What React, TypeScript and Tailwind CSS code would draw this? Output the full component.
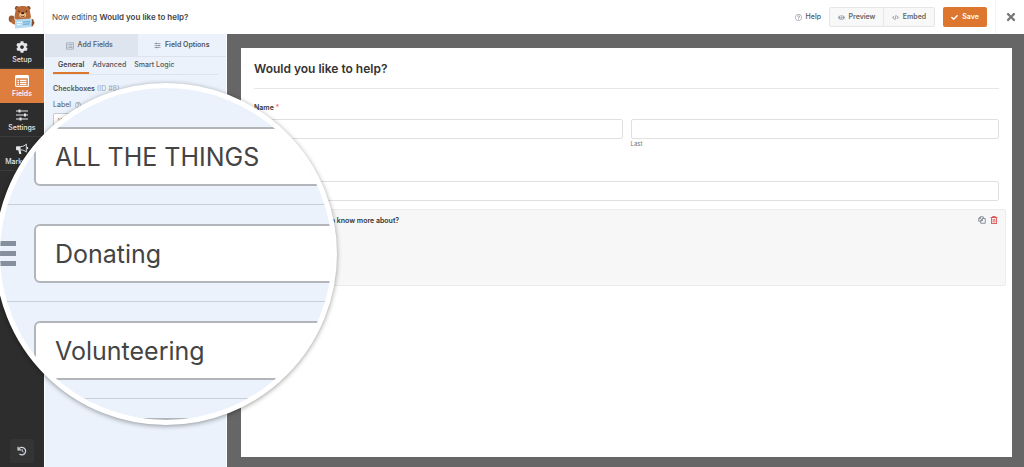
// src/App.tsx
import { useState } from 'react'
import { FaCheck, FaCode, FaCog, FaEye, FaRegListAlt, FaRegQuestionCircle, FaRegTrashAlt, FaTimes } from 'react-icons/fa'
import clsx from 'clsx'

const choices = ['ALL THE THINGS', 'Donating', 'Volunteering', '']

function BearLogo() {
    return (
        <svg viewBox="0 0 28 24" className="h-6 w-7" aria-hidden="true">
            {/* Arms */}
            <ellipse cx="3.6" cy="14" rx="2.9" ry="3.4" fill="#9c5a33" />
            <path d="M3 14l6 1v5.500l-5-2z" fill="#b86b3c" />
            <path d="M20 15l5-1 1.500 4-2 3.500-4-1z" fill="#8a4d2c" />
            {/* Head */}
            <circle cx="9" cy="3.200" r="2.100" fill="#8f4f2d" />
            <circle cx="20.400" cy="3.200" r="2.100" fill="#8f4f2d" />
            <path d="M7.500 6c0-3.500 3.500-5 7.200-5s7.200 1.500 7.200 5l1 5.500c0 3-3 4.500-8.200 4.500s-8.200-1.500-8.200-4.500z" fill="#b96a37" />
            <ellipse cx="14.700" cy="10" rx="3.500" ry="2.600" fill="#efc08f" />
            <ellipse cx="14.700" cy="8.200" rx="1.600" ry="1.100" fill="#3c2418" />
            <circle cx="11" cy="6.200" r=".8" fill="#3c2418" />
            <circle cx="18.400" cy="6.200" r=".8" fill="#3c2418" />
            <path d="M12.700 10.900q2 1.800 4 0" fill="none" stroke="#6b2f1c" strokeWidth=".9" />
            {/* Sign */}
            <path d="M7 14.500l17-1-.5 8.500-16.500 1.500z" fill="#b4dbf2" />
            <path d="M9 17.500l5-.3M9 19.700l4-.2" stroke="#eef8fe" strokeWidth="1" />
            <path d="M15 17l7-.4M15 19.300l6.500-.4" stroke="#6daad0" strokeWidth="1.200" />
        </svg>
    )
}

function SlidersIcon({ className }: { className?: string }) {
    return (
        <svg viewBox="0 0 14 12" className={className} fill="none" stroke="currentColor" strokeWidth="1.1" aria-hidden="true">
            <path d="M1 2h12M1 6h12M1 10h12" />
            <path d="M4.500 .6v2.800M10 4.600v2.800M5.500 8.600v2.800" strokeWidth="2" />
        </svg>
    )
}

function FieldsIcon({ className }: { className?: string }) {
    return (
        <svg viewBox="0 0 14 12" className={className} fill="none" stroke="currentColor" aria-hidden="true">
            <rect x=".6" y=".6" width="12.800" height="10.800" rx="1" strokeWidth="1.200" />
            <path d="M.6 2h12.800" strokeWidth="2.600" />
            <path d="M2.500 5.300h1.500M2.500 7.300h1.500M2.500 9.300h1.500M5 5.300h6.500M5 7.300h6.500M5 9.300h6.500" strokeWidth="1.200" />
        </svg>
    )
}

function MegaphoneIcon({ className }: { className?: string }) {
    return (
        <svg viewBox="0 0 14 13" className={className} fill="none" stroke="currentColor" aria-hidden="true">
            <path d="M1.500 3.500h4v4.300h-4a1 1 0 0 1-1-1V4.500a1 1 0 0 1 1-1z" fill="currentColor" stroke="none" />
            <path d="M3 7.500h2.400l1 4.500H4z" fill="currentColor" stroke="none" />
            <path d="M5.500 3.900C8.300 3.800 10 2.800 11.700 1.200v8.700C10 8.300 8.300 7.500 5.500 7.400" strokeWidth="1" />
            <path d="M13 4.300v2.400" strokeWidth="1.200" />
        </svg>
    )
}

function DuplicateIcon({ className }: { className?: string }) {
    return (
        <svg viewBox="0 0 16 16" className={className} fill="none" stroke="currentColor" strokeWidth="1.500" aria-hidden="true">
            <path d="M5 10.500H1.500V4.500l3.500-3h5.500v3" />
            <path d="M5.500 8.500l3.500-3.500h5.500v9.500h-9z" />
            <path d="M1.500 5H5V1.500M5.500 9H9V5" />
        </svg>
    )
}

function RevisionsIcon({ className }: { className?: string }) {
    return (
        <svg viewBox="0 0 12 12" className={className} fill="none" stroke="currentColor" strokeWidth="1.500" aria-hidden="true">
            <path d="M2 3.800A4.500 4.500 0 1 1 3 9.600" />
            <path d="M1.300 .8v3.700H5" />
            <path d="M6.200 3.800v2.400l1.600.9" strokeWidth="1.200" />
        </svg>
    )
}

const navItems = [
    { name: 'Setup', icon: <FaCog className="size-3" /> },
    { name: 'Fields', icon: <FieldsIcon className="h-3 w-3.5" /> },
    { name: 'Settings', icon: <SlidersIcon className="h-3 w-3.5" /> },
    { name: 'Marketing', icon: <MegaphoneIcon className="h-3 w-3.5" /> },
]

function Header() {
    return (
        <header className="flex h-[34px] shrink-0 items-center bg-white">
            <div className="flex h-full w-11 items-center justify-center border-r border-gray-100">
                <BearLogo />
            </div>
            <h1 className="ml-2 flex-1 text-[8px] text-[#444]">
                Now editing <strong className="font-semibold">Would you like to help?</strong>
            </h1>
            <a href="#help" className="mr-2 flex items-center gap-1 text-[7px] font-medium text-[#555]">
                <FaRegQuestionCircle className="size-[7px] text-gray-400" />
                Help
            </a>
            <div className="flex h-5 rounded-xs border border-[#e6e6e6] bg-[#f8f8f8] text-[7px] font-semibold text-[#666]">
                <button className="flex w-[54px] items-center justify-center gap-1 border-r border-[#e6e6e6]">
                    <FaEye className="size-[7px] text-gray-400" />
                    Preview
                </button>
                <button className="flex w-[50px] items-center justify-center gap-1">
                    <FaCode className="size-[7px] text-gray-400" />
                    Embed
                </button>
            </div>
            <button className="ml-2 flex h-5 w-11 items-center justify-center gap-1 rounded-xs bg-[#dd7730] text-[7px] font-semibold text-white">
                <FaCheck className="size-[7px]" />
                Save
            </button>
            <button aria-label="Close" className="ml-2 flex h-full w-[29px] items-center justify-center border-l border-gray-100 pl-0.5 text-[#777]">
                <FaTimes className="size-3" />
            </button>
        </header>
    )
}

function Sidebar() {
    return (
        <nav className="flex w-11 shrink-0 flex-col bg-[#2d2d2d] pt-px text-white">
            {navItems.map((item) => (
                <a
                    key={item.name}
                    href={`#${item.name.toLowerCase()}`}
                    className={clsx(
                        'flex h-[34px] flex-col items-center justify-center gap-0.5 pt-0.5 text-[7px] leading-[10px] font-medium',
                        item.name === 'Fields' ? 'bg-[#dd7d3e]' : 'border-b border-[#3c3c3c] text-gray-200'
                    )}
                >
                    {item.icon}
                    {item.name}
                </a>
            ))}
            <button aria-label="Revisions" className="mx-auto mt-auto mb-1 flex size-6 items-center justify-center rounded-xs bg-[#343434] text-gray-300">
                <RevisionsIcon className="size-2.5" />
            </button>
        </nav>
    )
}

function FieldPanel() {
    return (
        <aside className="w-[183px] shrink-0 border-x border-white bg-[#ebf2fb] text-[7px] text-[#555]">
            <div className="flex h-[23px] border-b border-[#dde4ed]">
                <button className="flex flex-1 items-center justify-center gap-1 bg-[#dee5ef] pt-px pr-1 font-medium">
                    <FaRegListAlt className="size-2 text-gray-400" />
                    Add Fields
                </button>
                <button className="flex flex-1 items-center justify-center gap-1 pt-px font-semibold">
                    <SlidersIcon className="size-[7px] text-gray-500" />
                    Field Options
                </button>
            </div>
            <div className="px-2">
                <div className="flex h-[18px] border-b border-[#dde4ed] font-medium">
                    <button className="border-b-2 border-[#dd7730] px-[5px] pt-0.5 font-semibold text-[#444]">General</button>
                    <button className="px-[3px]">Advanced</button>
                    <button className="px-[5px]">Smart Logic</button>
                </div>
                <h2 className="mt-2 leading-3 font-semibold">
                    Checkboxes <span className="font-normal text-gray-400">(ID #8)</span>
                </h2>
                <label htmlFor="field-label" className="mt-1 flex items-center gap-1 leading-3">
                    Label <FaRegQuestionCircle className="size-1.5 text-gray-400" />
                </label>
                <input id="field-label" defaultValue="Which would you like to know more about?" className="mt-0.5 h-4 w-full rounded-xs border border-[#c5cad1] bg-white px-1" />
            </div>
        </aside>
    )
}

function FormPreview() {
    return (
        <main className="flex-1 bg-[#666] pt-3.5 pr-3 pb-2.5 pl-3.5">
            <div className="h-full bg-white px-1.5 text-[#333]">
                <div className="px-[7px] pt-3">
                    <h2 className="border-b border-[#e6e6e6] pb-2.5 text-[12px] leading-[18px] font-semibold">Would you like to help?</h2>
                    <p className="mt-3.5 text-[7px] leading-[10px] font-semibold">
                        Name <span className="text-red-400">*</span>
                    </p>
                    <div className="mt-1.5 grid grid-cols-2 gap-2">
                        <input aria-label="First name" className="h-5 w-full min-w-0 rounded-xs border border-[#e0e0e0]" />
                        <div>
                            <input id="last-name" className="block h-5 w-full min-w-0 rounded-xs border border-[#e0e0e0]" />
                            <label htmlFor="last-name" className="block text-[6px] leading-[10px] text-gray-500">Last</label>
                        </div>
                    </div>
                    <input aria-label="Email" className="mt-8 block h-5 w-full rounded-xs border border-[#e0e0e0]" />
                </div>
                <section className="mt-2 flex h-[77px] items-start justify-between rounded-xs border border-[#ececec] bg-[#f7f7f7] px-[7px] pt-1.5">
                    <h3 className="text-[7px] leading-[10px] font-semibold">Which would you like to know more about?</h3>
                    <div className="flex gap-1">
                        <button aria-label="Duplicate field" className="text-gray-500"><DuplicateIcon className="size-2" /></button>
                        <button aria-label="Delete field" className="text-[#d63638]"><FaRegTrashAlt className="size-2" /></button>
                    </div>
                </section>
            </div>
        </main>
    )
}

function ChoicesLens() {
    const [values, setValues] = useState(choices)

    return (
        <div className="absolute top-[83px] -left-[5px] size-[342px] overflow-hidden rounded-full border-[5px] border-white bg-[#ebf2fb] pt-5 shadow-[0_1px_5px_rgba(0,0,0,0.4)]">
            {values.map((value, index) => (
                <div key={index} className="flex h-[97px] items-center gap-[18px] border-b border-[#c8ced6]">
                    <div className="flex w-4 shrink-0 flex-col gap-[5px]">
                        <span className="h-[5px] bg-[#868f9d]" />
                        <span className="h-[5px] bg-[#868f9d]" />
                        <span className="h-[5px] bg-[#868f9d]" />
                    </div>
                    <input
                        aria-label={`Choice ${index + 1}`}
                        value={value}
                        onChange={(e) => setValues(values.map((v, i) => (i === index ? e.target.value : v)))}
                        className="h-[59px] w-[320px] shrink-0 rounded-md border-2 border-[#b2b6bb] bg-white px-[19px] pt-0.5 text-[25px] text-[#444]"
                    />
                </div>
            ))}
        </div>
    )
}

export default function App() {
    return (
        <div className="relative flex h-screen flex-col overflow-hidden font-[Inter,'Liberation_Sans',sans-serif]">
            <Header />
            <div className="flex min-h-0 flex-1">
                <Sidebar />
                <FieldPanel />
                <FormPreview />
            </div>
            <ChoicesLens />
        </div>
    )
}
